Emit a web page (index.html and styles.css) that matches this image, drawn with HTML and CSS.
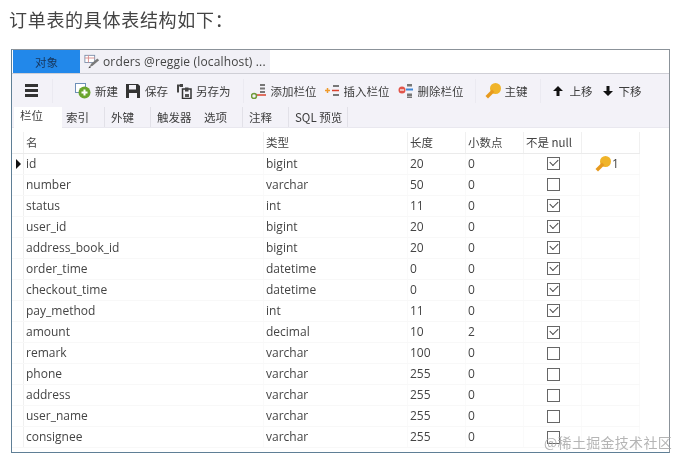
FILE: index.html
```html
<!DOCTYPE html>
<html lang="zh-CN">
<head>
<meta charset="utf-8">
<title>订单表</title>
<link rel="stylesheet" href="styles.css">
</head>
<body>
<h1 class="title">订单表的具体表结构如下：</h1>
<div class="window">
  <div class="tabbar">
    <div class="tab-object">对象</div>
    <div class="tab-doc">
      <svg class="i16" viewBox="0 0 18 18"><rect x="1" y="1.5" width="11" height="8" fill="#fff" stroke="#7d8ea8"/><path d="M1 4.5h11M5 1.5v8" stroke="#d98a8a"/><path d="M6 15l2-4 7-6 2 2-7 6z" fill="#7a7a7a"/><path d="M5 16l1-2 2 1z" fill="#333"/></svg>
      <span>orders @reggie (localhost) ...</span>
    </div>
  </div>
  <div class="toolbar">
    <div class="menu"><i></i><i></i><i></i></div>
    <div class="sep sep-a"></div>
    <div class="tool t-new"><svg class="i16" viewBox="0 0 16 16"><rect x="0.5" y="0.5" width="10" height="9" fill="#fff" stroke="#6d8fb8"/><circle cx="9.5" cy="9.5" r="6" fill="#6aa52e"/><path d="M9.5 6.5v6M6.5 9.5h6" stroke="#fff" stroke-width="2"/></svg><span>新建</span></div>
    <div class="tool t-save"><svg class="i16" viewBox="0 0 16 16"><path d="M1 1h12l2 2v12H1z" fill="#333"/><rect x="4" y="2" width="7" height="4.500" fill="#f3f2f8"/><rect x="4" y="10" width="8" height="5" fill="#f3f2f8"/></svg><span>保存</span></div>
    <div class="tool t-saveas"><svg class="i16" viewBox="0 0 16 16"><path d="M1 1.500h5v2H3v6H1zM4 1h3v3H4z" fill="#444"/><path d="M6.500 6h8.500v9.500H6.500z" fill="none" stroke="#333" stroke-width="1.500"/><rect x="9" y="4.500" width="3.500" height="4" fill="#444"/><rect x="9" y="11" width="4" height="3" fill="#555"/></svg><span>另存为</span></div>
    <div class="sep sep-b"></div>
    <div class="tool t-add"><svg class="i16" viewBox="0 0 16 16"><path d="M9 1h5v2H9zM9 4.500h5v2H9zM9 8h5v2H9z" fill="#777"/><path d="M5 12h10" stroke="#d9432f" stroke-width="1.500"/><circle cx="3" cy="13" r="2.500" fill="#f3f2f8" stroke="#6f9a3a" stroke-width="1.500"/></svg><span>添加栏位</span></div>
    <div class="tool t-ins"><svg class="i16" viewBox="0 0 16 16"><path d="M9 2h6v2H9zM9 11h6v2H9z" fill="#777"/><path d="M8 7.500h7" stroke="#d9432f" stroke-width="1.500"/><path d="M3.500 5v5M1 7.500h5" stroke="#ef9a2b" stroke-width="1.500"/></svg><span>插入栏位</span></div>
    <div class="tool t-del"><svg class="i16" viewBox="0 0 16 16"><path d="M9 1h5v2.500H9zM9 10.500h5V13H9zM9 13.500h5V15H9z" fill="#777"/><path d="M8 6.500h7" stroke="#3d86d6" stroke-width="2"/><circle cx="4" cy="7" r="3.500" fill="#e2554b"/><path d="M2 7h4" stroke="#fff" stroke-width="1.200"/></svg><span>删除栏位</span></div>
    <div class="sep sep-c"></div>
    <div class="tool t-key"><svg class="i16" viewBox="0 0 16 16"><use href="#key"/></svg><span>主键</span></div>
    <div class="sep sep-d"></div>
    <div class="tool t-up"><svg class="arrow" viewBox="0 0 10 10"><path d="M5 0l5 5H6.500v5h-3V5H0z" fill="#111"/></svg><span>上移</span></div>
    <div class="tool t-down"><svg class="arrow" viewBox="0 0 10 10"><path d="M5 10l5-5H6.500V0h-3v5H0z" fill="#111"/></svg><span>下移</span></div>
  </div>
  <div class="subtabs">
    <div class="sub sub-active">栏位</div>
    <div class="sub w-a">索引</div>
    <div class="sub w-b">外键</div>
    <div class="sub w-c">触发器</div>
    <div class="sub w-d">选项</div>
    <div class="sub w-e">注释</div>
    <div class="sub w-f">SQL 预览</div>
  </div>
  <div class="grid">
    <div class="row head"><div class="marker"></div><div class="cell">名</div><div class="cell">类型</div><div class="cell">长度</div><div class="cell">小数点</div><div class="cell">不是 null</div><div class="cell"></div></div>
    <div class="row"><div class="marker"><b></b></div><div class="cell">id</div><div class="cell">bigint</div><div class="cell">20</div><div class="cell">0</div><div class="cell check on"><i></i></div><div class="cell pk"><svg class="i16" viewBox="0 0 16 16"><use href="#key"/></svg>1</div></div>
    <div class="row"><div class="marker"></div><div class="cell">number</div><div class="cell">varchar</div><div class="cell">50</div><div class="cell">0</div><div class="cell check"><i></i></div><div class="cell"></div></div>
    <div class="row"><div class="marker"></div><div class="cell">status</div><div class="cell">int</div><div class="cell">11</div><div class="cell">0</div><div class="cell check on"><i></i></div><div class="cell"></div></div>
    <div class="row"><div class="marker"></div><div class="cell">user_id</div><div class="cell">bigint</div><div class="cell">20</div><div class="cell">0</div><div class="cell check on"><i></i></div><div class="cell"></div></div>
    <div class="row"><div class="marker"></div><div class="cell">address_book_id</div><div class="cell">bigint</div><div class="cell">20</div><div class="cell">0</div><div class="cell check on"><i></i></div><div class="cell"></div></div>
    <div class="row"><div class="marker"></div><div class="cell">order_time</div><div class="cell">datetime</div><div class="cell">0</div><div class="cell">0</div><div class="cell check on"><i></i></div><div class="cell"></div></div>
    <div class="row"><div class="marker"></div><div class="cell">checkout_time</div><div class="cell">datetime</div><div class="cell">0</div><div class="cell">0</div><div class="cell check on"><i></i></div><div class="cell"></div></div>
    <div class="row"><div class="marker"></div><div class="cell">pay_method</div><div class="cell">int</div><div class="cell">11</div><div class="cell">0</div><div class="cell check on"><i></i></div><div class="cell"></div></div>
    <div class="row"><div class="marker"></div><div class="cell">amount</div><div class="cell">decimal</div><div class="cell">10</div><div class="cell">2</div><div class="cell check on"><i></i></div><div class="cell"></div></div>
    <div class="row"><div class="marker"></div><div class="cell">remark</div><div class="cell">varchar</div><div class="cell">100</div><div class="cell">0</div><div class="cell check"><i></i></div><div class="cell"></div></div>
    <div class="row"><div class="marker"></div><div class="cell">phone</div><div class="cell">varchar</div><div class="cell">255</div><div class="cell">0</div><div class="cell check"><i></i></div><div class="cell"></div></div>
    <div class="row"><div class="marker"></div><div class="cell">address</div><div class="cell">varchar</div><div class="cell">255</div><div class="cell">0</div><div class="cell check"><i></i></div><div class="cell"></div></div>
    <div class="row"><div class="marker"></div><div class="cell">user_name</div><div class="cell">varchar</div><div class="cell">255</div><div class="cell">0</div><div class="cell check"><i></i></div><div class="cell"></div></div>
    <div class="row"><div class="marker"></div><div class="cell">consignee</div><div class="cell">varchar</div><div class="cell">255</div><div class="cell">0</div><div class="cell check"><i></i></div><div class="cell"></div></div>
  </div>
</div>
<div class="watermark">@稀土掘金技术社区</div>
<svg class="defs" width="0" height="0"><defs><g id="key"><circle cx="10.500" cy="5.500" r="5.500" fill="#f0b429"/><path d="M7 6.500L0.500 13 3 15.500 9.500 9z" fill="#e79a1e"/></g></defs></svg>
</body>
</html>
```

FILE: styles.css
```css
* { box-sizing: border-box; }
html, body { margin: 0; height: 100%; }
body {
  position: relative;
  width: 675px;
  height: 456px;
  overflow: hidden;
  background: #fff;
  font-family: "Open Sans", "Noto Sans CJK SC", sans-serif;
  color: #333;
}
.title {
  margin: 0;
  height: 49px;
  padding: 7px 0 0 9px;
  font: 400 18px/24px "Noto Sans CJK SC", sans-serif;
  letter-spacing: .7px;
  color: #444;
  filter: blur(.3px);
}
.window {
  width: 659px;
  height: 404px;
  margin-left: 11px;
  border: 1px solid #8b9299;
  border-bottom-color: #5f7f96;
  border-left-color: #5f7f96;
  font-size: 11.5px;
  background: #fff;
  filter: blur(.35px);
}
.tabbar { display: flex; height: 24px; border-bottom: 1px solid #cfcfd6; }
.tab-object {
  width: 67px;
  margin-left: 1px;
  background: #2288ea;
  color: #17365c;
  text-align: center;
  font: 11.5px/24px "Noto Sans CJK SC", sans-serif;
}
.tab-doc {
  display: flex;
  align-items: center;
  gap: 3px;
  width: 190px;
  padding-left: 4px;
  background: #f1f0f6;
  font-size: 12px;
  letter-spacing: .15px;
  color: #444;
}
.i16 { width: 16px; height: 16px; flex: none; }
.toolbar {
  position: relative;
  display: flex;
  align-items: center;
  height: 33px;
  background: #f3f2f8;
}
.menu { display: flex; flex-direction: column; gap: 2px; width: 13px; margin-left: 13px; }
.menu i { display: block; height: 3px; background: #333; }
.sep { width: 1px; height: 24px; background: #ebeaf1; flex: none; }
.sep-a { margin-left: 14px; }
.tool {
  display: flex;
  align-items: center;
  flex: none;
  gap: 4px;
  font: 11.500px/16px "Noto Sans CJK SC", sans-serif;
  color: #3c3c3c;
}
.t-new { margin-left: 22px; }
.t-save { margin-left: 7px; }
.t-saveas { margin-left: 8px; }
.sep-b { margin-left: 12px; }
.t-add { margin-left: 7px; }
.t-ins { margin-left: 7px; }
.t-del { margin-left: 8px; }
.sep-c { margin-left: 11px; }
.t-key { margin-left: 9px; }
.sep-d { margin-left: 12px; }
.t-up { margin-left: 12px; gap: 7px; }
.t-down { margin-left: 10px; gap: 6px; }
.arrow { width: 10px; height: 10px; flex: none; }
.subtabs {
  display: flex;
  height: 21px;
  padding-left: 2px;
  background: #f3f2f8;
  border-bottom: 1px solid #e9e8ef;
  font: 11.500px/21px "Noto Sans CJK SC", sans-serif;
  color: #3c3c3c;
}
.sub { padding-left: 6px; border-right: 1px solid #e2e1e8; flex: none; }
.sub-active {
  width: 48px;
  height: 23px;
  margin-top: -2px;
  padding-left: 6px;
  background: #fff;
  border-right: 0;
  line-height: 21px;
}
.sub-active + .sub { padding-left: 4px; }
.w-a { width: 43px; }
.w-b { width: 46px; }
.w-c { width: 46px; border-right: 0; padding-left: 6px; }
.w-d { width: 46px; padding-left: 7px; }
.w-e { width: 46px; }
.w-f { width: 59px; }
.grid { padding-top: 4px; }
.row {
  display: grid;
  grid-template-columns: 12px 240px 144px 58px 58px 58px 58px;
  height: 21.070px;
  width: 628px;
  border-bottom: 1px solid #f8f8f8;
}
.head { height: 21.500px; border-bottom-color: #ebebeb; }
.head .cell { font-family: "Noto Sans CJK SC", sans-serif; font-size: 11.500px; border-right: 1px solid #f0f0f0; }
.marker { position: relative; border-right: 1px solid #f0f0f0; }
.marker b {
  position: absolute;
  left: 4px;
  top: 5px;
  border-left: 5px solid #111;
  border-top: 5px solid transparent;
  border-bottom: 5px solid transparent;
}
.cell {
  padding-left: 2px;
  border-right: 1px solid #fafafa;
  font-size: 12px;
  line-height: 20px;
  color: #444;
  white-space: nowrap;
  overflow: hidden;
}
.check { display: flex; align-items: center; justify-content: center; }
.check i {
  position: relative;
  display: block;
  width: 13px;
  height: 13px;
  border: 1px solid #666;
  background: #fff;
}
.check.on i::after {
  content: "";
  position: absolute;
  left: 2px;
  top: 1px;
  width: 7px;
  height: 4px;
  border-left: 1px solid #444;
  border-bottom: 1px solid #444;
  transform: rotate(-45deg);
}
.pk { display: flex; align-items: center; gap: 1px; padding-left: 13px; }
.watermark {
  position: absolute;
  right: 3px;
  top: 432px;
  font: 14px/20px "Noto Sans CJK SC", serif;
  letter-spacing: .3px;
  color: #a9a9a9;
  opacity: .85;
}
.defs { position: absolute; }
```
